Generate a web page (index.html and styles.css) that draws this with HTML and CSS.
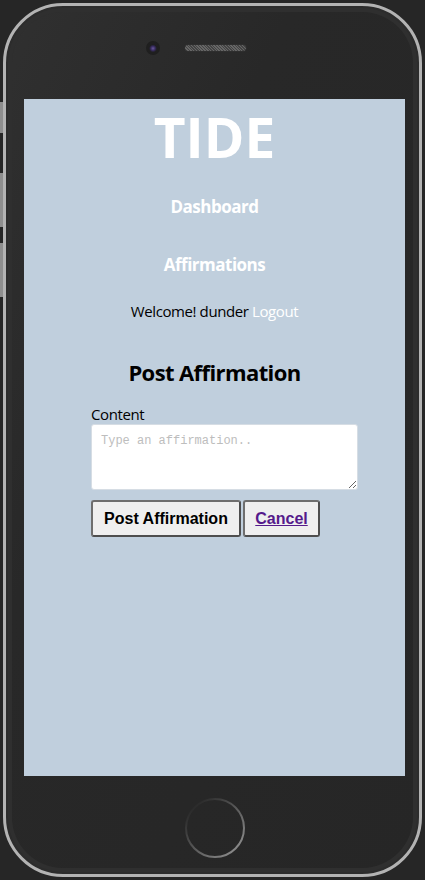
FILE: index.html
```html
<!DOCTYPE html>
<html lang="en">
<head>
<meta charset="utf-8">
<title>TIDE - Post Affirmation</title>
<link rel="stylesheet" href="styles.css">
</head>
<body>
<div class="phone">
  <span class="side-btn side-btn-1"></span>
  <span class="side-btn side-btn-2"></span>
  <span class="side-btn side-btn-3"></span>
  <div class="phone-top">
    <span class="camera"></span>
    <span class="speaker"></span>
  </div>
  <main class="screen">
    <h1 class="brand">TIDE</h1>
    <nav class="nav">
      <a class="nav-link nav-link-first" href="#">Dashboard</a>
      <a class="nav-link" href="#">Affirmations</a>
    </nav>
    <p class="welcome">Welcome! dunder <a class="logout" href="#">Logout</a></p>
    <h2 class="title">Post Affirmation</h2>
    <form class="form">
      <label class="label" for="content">Content</label>
      <textarea class="textarea" id="content" placeholder="Type an affirmation.."></textarea>
      <div class="actions">
        <button class="btn" type="button">Post Affirmation</button>
        <button class="btn" type="button"><a class="btn-link" href="#">Cancel</a></button>
      </div>
    </form>
  </main>
  <div class="phone-bottom">
    <svg class="home" width="64" height="64" viewBox="0 0 64 64">
      <defs>
        <linearGradient id="hg" x1="0.1" y1="0.1" x2="0.9" y2="0.9">
          <stop offset="0" stop-color="#262626"/>
          <stop offset="0.4" stop-color="#4e4e4e"/>
          <stop offset="1" stop-color="#8c8c8c"/>
        </linearGradient>
      </defs>
      <circle cx="32" cy="32" r="29" fill="none" stroke="url(#hg)" stroke-width="2"/>
    </svg>
  </div>
</div>
</body>
</html>
```

FILE: styles.css
```css
html, body {
  margin: 0;
  padding: 0;
  background: #262626;
}

body {
  width: 425px;
  height: 880px;
  overflow: hidden;
}

.phone {
  position: relative;
  box-sizing: border-box;
  margin: 3px;
  width: 419px;
  height: 874px;
  border: 3px solid #b3b3b3;
  border-radius: 60px;
  background: linear-gradient(115deg, #303030 0%, #282828 35%, #262626 100%);
  box-shadow: inset 0 0 0 2px #2c2c2c, inset 0 0 0 6px #2f2f2f, inset 0 0 0 1px #1c1c1c;
  padding-left: 18px;
  display: flex;
  flex-direction: column;
}

.side-btn {
  position: absolute;
  left: -6px;
  width: 3px;
  background: #8e8e8e;
}
.side-btn-1 { top: 96px; height: 31px; }
.side-btn-2 { top: 167px; height: 54px; }
.side-btn-3 { top: 237px; height: 54px; }

.phone-top {
  height: 93px;
  width: 381px;
  display: flex;
  align-items: flex-start;
  padding-top: 38px;
  box-sizing: border-box;
}

.camera {
  width: 8px;
  height: 8px;
  margin-left: 125px;
  border-radius: 50%;
  background: radial-gradient(circle at 50% 55%, #6a5a9a 0, #3c2f66 2px, #2a2440 3px, #1c1c1c 4px);
  box-shadow: 0 0 0 3px #1f1f1f;
}

.speaker {
  width: 61px;
  height: 6px;
  margin-left: 28px;
  margin-top: 1px;
  border-radius: 3px;
  background: repeating-linear-gradient(45deg, #666 0 1px, #444 1px 2px);
  box-shadow: 0 0 0 1px #2e2e2e;
}

.screen {
  width: 381px;
  height: 677px;
  background: #c0cfdd;
  display: flex;
  flex-direction: column;
  font-family: "Open Sans", "Noto Sans", sans-serif;
  color: #000;
}

.brand {
  margin: 10px 0 0;
  text-align: center;
  font-size: 55px;
  line-height: 56px;
  font-weight: 700;
  color: #fff;
}

.nav {
  display: flex;
  flex-direction: column;
  align-items: center;
}

.nav-link {
  display: block;
  margin-top: 38px;
  font-size: 17px;
  line-height: 20px;
  font-weight: 700;
  letter-spacing: -0.5px;
  color: #fff;
  text-decoration: none;
}
.nav-link-first { margin-top: 32px; }

.welcome {
  margin: 26px 0 0;
  text-align: center;
  font-size: 15px;
  line-height: 20px;
  letter-spacing: -0.4px;
}

.logout {
  color: #fff;
  text-decoration: none;
}

.title {
  margin: 37px 0 0;
  text-align: center;
  font-size: 22px;
  line-height: 28px;
  font-weight: 700;
  letter-spacing: -0.6px;
}

.form {
  margin: 18px 0 0 67px;
  display: flex;
  flex-direction: column;
  align-items: flex-start;
}

.label {
  font-size: 15px;
  line-height: 20px;
  letter-spacing: -0.4px;
}

.textarea {
  box-sizing: border-box;
  width: 267px;
  height: 66px;
  margin: 0;
  padding: 9px 9px;
  border: 1px solid #d6dde4;
  border-radius: 3px;
  background: #fff;
  font-family: "Liberation Mono", "DejaVu Sans Mono", monospace;
  font-size: 12px;
  resize: vertical;
}
.textarea::placeholder {
  color: #bdbdbd;
}

.actions {
  display: flex;
  gap: 2px;
  margin-top: 10px;
}

.btn {
  box-sizing: border-box;
  height: 37px;
  padding: 0 10px;
  border: 2px solid #4e4e4e;
  border-top-color: #6e6e6e;
  border-left-color: #6e6e6e;
  border-radius: 3px;
  background: #efefef;
  font-family: "Liberation Sans", Arial, sans-serif;
  font-size: 16px;
  font-weight: 700;
  color: #000;
}
.btn:first-child { width: 150px; }
.btn:last-child { width: 77px; }

.btn-link {
  color: #551a8b;
  text-decoration: underline;
}

.phone-bottom {
  flex: 1;
  width: 381px;
  display: flex;
  justify-content: center;
  align-items: flex-start;
  padding-top: 20px;
  box-sizing: border-box;
}

.home {
  display: block;
}
```
